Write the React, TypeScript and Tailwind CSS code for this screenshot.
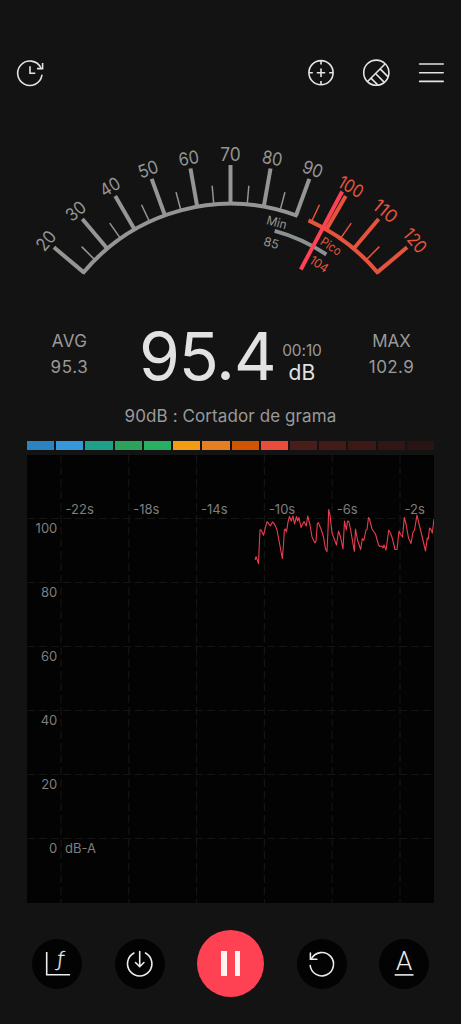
import React from 'react';

const CX = 230.5;
const CY = 395.5;
const GREY = '#959595';
const RED = '#e5533d';

const point = (radius: number, deg: number) => {
  const a = (deg * Math.PI) / 180;
  return { x: CX + radius * Math.sin(a), y: CY - radius * Math.cos(a) };
};

const arc = (radius: number, from: number, to: number) => {
  const a = point(radius, from);
  const b = point(radius, to);
  return `M${a.x} ${a.y}A${radius} ${radius} 0 0 1 ${b.x} ${b.y}`;
};

const levels = [20, 30, 40, 50, 60, 70, 80, 90, 100, 110, 120];
const halfLevels = [25, 35, 45, 55, 65, 75, 85, 95, 105, 115];

const segments = [
  'bg-[#2b84c0]',
  'bg-[#3498db]',
  'bg-[#1aa187]',
  'bg-[#2ba35c]',
  'bg-[#28b062]',
  'bg-[#f39c12]',
  'bg-[#e67e22]',
  'bg-[#d35400]',
  'bg-[#e74c3c]',
  'bg-[#4a1c1a]',
  'bg-[#431b19]',
  'bg-[#3c1817]',
  'bg-[#321615]',
  'bg-[#271413]',
];

const rows = [
  { label: '100', y: 518.5 },
  { label: '80', y: 582.5 },
  { label: '60', y: 646.5 },
  { label: '40', y: 710.5 },
  { label: '20', y: 774.5 },
  { label: '0', y: 838.5 },
];

const columns = [
  { label: '-22s', x: 61 },
  { label: '-18s', x: 128.8 },
  { label: '-14s', x: 196.6 },
  { label: '-10s', x: 264.4 },
  { label: '-6s', x: 332.2 },
  { label: '-2s', x: 400 },
];

const wave =
  '255,560 256,556.7 257.3,560 258.5,563.7 259.3,545 260,530 261,529.7 263.5,535.3 265,529 267,521.7 270.5,525.8 272.5,522 274.5,524 277,530 280,546 282.3,558.5 283.5,545 284.3,530 285.3,529 286.5,532 288,522 289.5,516.5 291.3,521 293,516 294.5,524 296.5,516.5 297.7,521 299,517.5 301,527.5 304,521.5 306.3,526 307.7,516 310,525 312,537 315,543 316,541 317.3,524 318.3,522.5 321,529 323.5,537 325.5,549 327,551.5 328,530 328.7,509.5 330,515 332,533 336.5,545 338.5,531 340.5,537 343,549 344.5,521 346.3,530 347.5,521 348.8,521.5 350.5,529 352,538 354.3,551.5 355.5,529 357.5,540 360.7,549.5 362.3,538.5 363.8,540.5 366,530 367,529.5 368.5,517.5 369.5,519 372,529 375.5,534 378.5,545 380,546.5 382,546 383,548 384,545 386,550 387,543 388.7,530 390.5,533 392.5,539 395,549.5 397,549.5 399,531 400.5,534.5 402.5,537 404.3,517.5 406,524 408.5,538 411,543.5 413,532 414.5,530 417,515 419,524 421.5,534 425.5,551 427.3,538 428.3,539 429.5,528 431,529.5 432.3,533 434,519';

const Header: React.FC = () => (
  <header className="flex h-[87px] items-end justify-between pr-[16px] pl-[16px]">
    <svg className="h-7 w-7" viewBox="16 58.8 28 28" fill="none" stroke="#e4e4e2" strokeWidth="1.6">
      <path d="M41.9 75.2A12.2 12.2 0 1 1 40.6 67.2" strokeLinecap="round" />
      <path d="M42.6 62.8V68.4H37" />
      <path d="M30 66V73H35.3" />
    </svg>
    <div className="flex items-center gap-[27px]">
      <svg className="h-7 w-7" viewBox="-14 -13.7 28 28" fill="none" stroke="#e4e4e2" strokeWidth="1.6">
        <circle r="12.1" />
        <path d="M0 -12V-8.2M0 12V8.2M-12 0H-8.2M12 0H8.2M-4.2 0H4.2M0 -4.2V4.2" />
      </svg>
      <svg className="h-7 w-7" viewBox="-14.3 -13.7 28 28" fill="none" stroke="#e4e4e2" strokeWidth="1.6">
        <circle r="12.6" />
        <path d="M-9 9L9 -9M-5.4 5.4L1.4 12.2M-0.8 0.8L7.8 9.4M3.8 -3.8L11.8 4.2" />
      </svg>
      <svg className="h-7 w-7" viewBox="-14 -13.7 28 28" stroke="#e4e4e2" strokeWidth="1.6">
        <path d="M-11.4 -8.7H12.2M-11.4 0H12.2M-11.4 8.7H12.2" strokeLinecap="round" />
      </svg>
    </div>
  </header>
);

const Gauge: React.FC = () => (
  <svg className="mt-[43px] block h-[160px] w-[461px]" viewBox="0 130 461 160" fill="none">
    {/* Scale */}
    <path d={arc(191.7, -50.5, 20.5)} stroke={GREY} strokeWidth="4" />
    <path d={arc(191.7, 24, 50.5)} stroke={RED} strokeWidth="4" />
    {levels.map((level) => (
      <g key={level} transform={`rotate(${level - 70} ${CX} ${CY})`}>
        <path d={`M${CX} 165V204`} stroke={level > 90 ? RED : GREY} strokeWidth="4" />
        <text
          x={CX}
          y="161"
          textAnchor="middle"
          fontSize="18"
          textLength={level > 90 ? 26 : 20.5}
          lengthAdjust="spacingAndGlyphs"
          fill={level > 90 ? RED : GREY}
        >
          {level}
        </text>
      </g>
    ))}
    {halfLevels.map((level) => (
      <path
        key={level}
        d={`M${CX} 185V203`}
        stroke={level > 90 ? RED : GREY}
        strokeWidth="1.5"
        transform={`rotate(${level - 70} ${CX} ${CY})`}
      />
    ))}

    {/* Min and peak range */}
    <path d={arc(170.5, 15, 34.2)} stroke="#8b9093" strokeWidth="4" />
    <g fontSize="12.5" textAnchor="middle">
      <g transform={`rotate(15 ${CX} ${CY})`} fill={GREY}>
        <text x={CX} y="220.8" textLength="20.5" lengthAdjust="spacingAndGlyphs">Min</text>
        <text x={CX} y="242">85</text>
      </g>
      <g transform={`rotate(34 ${CX} ${CY})`} fill={RED}>
        <text x={CX} y="220" textLength="22.5" lengthAdjust="spacingAndGlyphs">Pico</text>
        <text x={CX} y="241.5" textLength="19.5" lengthAdjust="spacingAndGlyphs">104</text>
      </g>
    </g>

    {/* Needle */}
    <path d="M342.2 191.5L300.8 269.5" stroke="#ff4154" strokeWidth="4" />
  </svg>
);

const Readout: React.FC = () => (
  <section className="mt-[30px] flex h-[80px] items-start text-[#9a9a9a]">
    <div className="w-[139px] pt-[9px] text-center text-[17px] leading-[25.5px]">
      <p className="tracking-[0.3px]">AVG</p>
      <p className="tracking-[0.7px]">95.3</p>
    </div>
    <div className="flex w-[183px] gap-[7px]">
      <p className="w-[136px] text-[66px] leading-[73px] font-normal tracking-[-1.1px] whitespace-nowrap text-[#e2e2e2]">95.4</p>
      <div className="w-[40px] pt-[20px] text-center whitespace-nowrap">
        <p className="text-[15.5px] leading-[22px] tracking-[-0.1px]">00:10</p>
        <p className="text-[21px] leading-[22px] tracking-[0.3px] text-[#e2e2e2]">dB</p>
      </div>
    </div>
    <div className="w-[139px] pt-[9px] text-center text-[17px] leading-[25.5px]">
      <p className="tracking-[-0.1px]">MAX</p>
      <p className="tracking-[0.4px]">102.9</p>
    </div>
  </section>
);

const Chart: React.FC = () => (
  <svg className="mt-[5px] block h-[448px] w-[407px] bg-[#030303]" viewBox="27 455 407 448" fill="none">
    <g stroke="#141414" strokeWidth="1.2" strokeDasharray="8 4">
      {columns.map((c) => (
        <path key={c.label} d={`M${c.x} 455V903`} />
      ))}
      {rows.map((r) => (
        <path key={r.label} d={`M27 ${r.y}H434`} />
      ))}
    </g>
    <g fontSize="13" fill="#7e7e7e">
      {columns.map((c) => (
        <text key={c.label} x={c.x + 4.5} y="514.3">{c.label}</text>
      ))}
      {rows.map((r) => (
        <text key={r.label} x="57.3" y={r.y + 14.3} textAnchor="end">{r.label}</text>
      ))}
      <text x="65" y="853.3">dB-A</text>
    </g>
    <polyline points={wave} stroke="#ec3d50" strokeWidth="1.1" strokeLinejoin="round" />
  </svg>
);

const roundButton = 'flex h-[50px] w-[50px] items-center justify-center rounded-full bg-[#030303]';

const Controls: React.FC = () => (
  <nav className="mt-[27px] flex h-[67px] items-center justify-between px-[32px]">
    <button className={roundButton}>
      <svg className="h-[50px] w-[50px]" viewBox="-25 -24.5 50 50" fill="none" stroke="#ededed" strokeWidth="1.6">
        <path d="M-10.3 -11.5V11.3H13" />
        <text x="3.8" y="2.6" textAnchor="middle" fontFamily="Lato" fontStyle="italic" fontWeight="300" fontSize="22" fill="#ededed" strokeWidth="0.3">ƒ</text>
      </svg>
    </button>
    <button className={roundButton}>
      <svg className="h-[50px] w-[50px]" viewBox="-24.7 -24.5 50 50" fill="none" stroke="#ededed" strokeWidth="1.6" strokeLinecap="round">
        <path d="M-5.8 -10.5A12.2 12.2 0 1 0 5.8 -10.5" />
        <path d="M0 -12V3M-4.2 -1L0 3.2L4.2 -1" />
      </svg>
    </button>
    <button className="flex h-[67px] w-[67px] items-center justify-center gap-[8px] rounded-full bg-[#ff4154]">
      <span className="h-[25px] w-[5.5px] bg-[#fff4f2]" />
      <span className="h-[25px] w-[5.5px] bg-[#fff4f2]" />
    </button>
    <button className={roundButton}>
      <svg className="h-[50px] w-[50px]" viewBox="-24.7 -24.5 50 50" fill="none" stroke="#ededed" strokeWidth="1.6" strokeLinecap="round">
        <path d="M-11.5 2A11.7 11.7 0 1 0 -10.2 -4.8" />
        <path d="M-11.3 -10.5V-4.2H-4.8" />
      </svg>
    </button>
    <button className={roundButton}>
      <svg className="h-[50px] w-[50px]" viewBox="-25 -24.5 50 50" fill="none">
        <text x="0.2" y="6.3" textAnchor="middle" fontFamily="Roboto" fontWeight="300" fontSize="26" fill="#ededed">A</text>
        <path d="M-9.3 11.4H9.5" stroke="#ededed" strokeWidth="1.6" />
      </svg>
    </button>
  </nav>
);

const App: React.FC = () => {
  return (
    <main className="h-[1024px] w-[461px] overflow-hidden bg-[#131313] font-['Inter','Open_Sans',sans-serif]">
      <Header />
      <Gauge />
      <Readout />
      <p className="text-center text-[17px] leading-[32px] tracking-[0.1px] text-[#9a9a9a]">90dB : Cortador de grama</p>

      <div className="mt-[9px] px-[27px]">
        {/* Level bar */}
        <div className="flex h-[9px] gap-[2px]">
          {segments.map((color) => (
            <div key={color} className={`flex-1 ${color}`} />
          ))}
        </div>
        <Chart />
      </div>

      <Controls />
    </main>
  );
};

export default App;
